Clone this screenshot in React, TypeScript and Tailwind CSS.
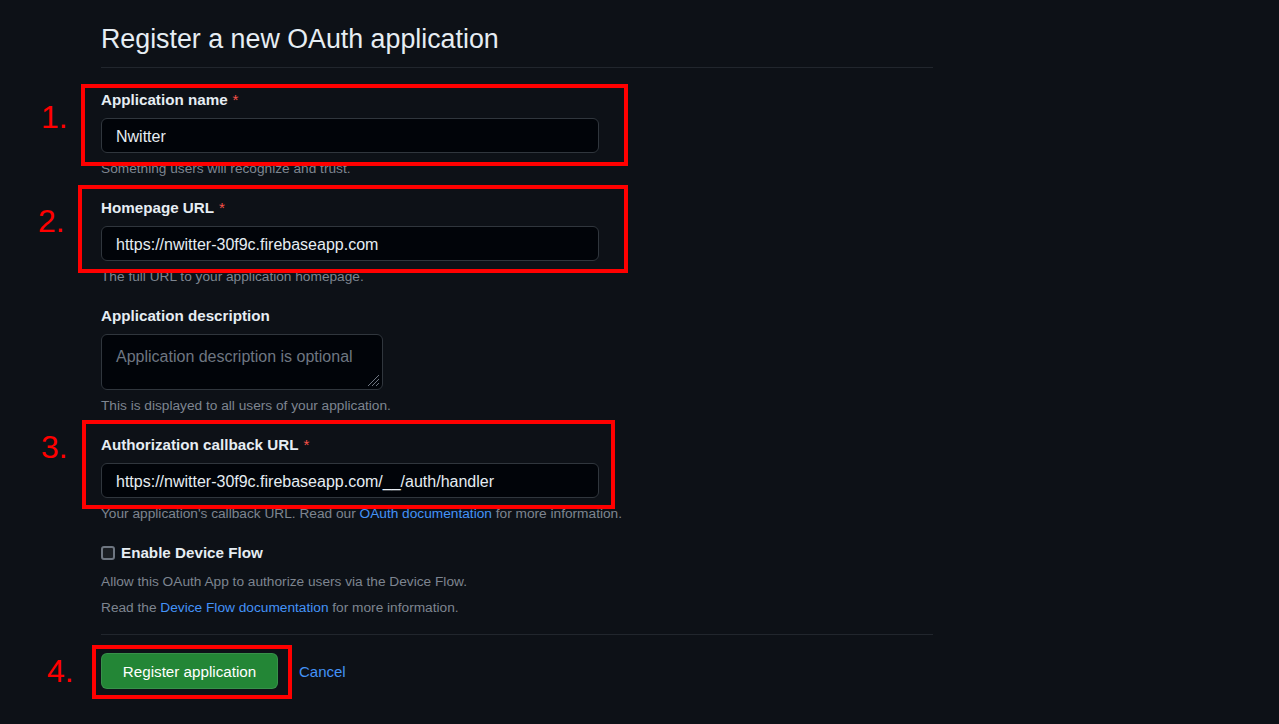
import type { ReactNode } from 'react'

const inputCls =
  'block h-[35px] w-[498px] rounded-[6px] border border-[#30363d] bg-[#010409] px-[14px] pt-[3px] text-[16px] text-[#e6edf3] outline-none'

function Label({ children, required }: { children: ReactNode; required?: boolean }) {
  return (
    <label className="block h-[20px] text-[15.2px] font-bold leading-[20px] text-[#e6edf3]">
      {children}
      {required && <span className="ml-[5px] font-normal text-[#f85149]">*</span>}
    </label>
  )
}

function Hint({ children, className = '' }: { children: ReactNode; className?: string }) {
  return <p className={`h-[18px] text-[13.7px] leading-[18px] text-[#7d8590] ${className}`}>{children}</p>
}

function Field({ label, required, value, hint }: { label: string; required?: boolean; value: string; hint: ReactNode }) {
  return (
    <div className="mt-[20px] first:mt-0">
      <Label required={required}>{label}</Label>
      <input readOnly value={value} className={`mt-[8px] ${inputCls}`} />
      <Hint className="mt-[7px]">{hint}</Hint>
    </div>
  )
}

// red annotation overlays from the screenshot
const marks = [
  { n: '1.', left: 'left-[41px] top-[101px]', box: 'left-[81px] top-[84px] h-[82px] w-[547px]' },
  { n: '2.', left: 'left-[38px] top-[205px]', box: 'left-[78px] top-[185px] h-[88px] w-[550px]' },
  { n: '3.', left: 'left-[41px] top-[431px]', box: 'left-[82px] top-[420px] h-[89px] w-[533px]' },
  { n: '4.', left: 'left-[47px] top-[655px]', box: 'left-[92px] top-[645px] h-[54px] w-[200px]' },
]

export default function App() {
  return (
    <div className="relative min-h-screen bg-[#0d1117] font-['Liberation_Sans',Arial,sans-serif] text-[#e6edf3]">
      <main className="ml-[101px] w-[832px] pt-[21px]">
        <h2 className="border-b border-[#21262d] pb-[10px] text-[26.8px] font-normal leading-[36px] text-[#e6edf3]">
          Register a new OAuth application
        </h2>

        <form className="pt-[22px]" onSubmit={(e) => e.preventDefault()}>
          <Field label="Application name" required value="Nwitter" hint="Something users will recognize and trust." />
          <Field
            label="Homepage URL"
            required
            value="https://nwitter-30f9c.firebaseapp.com"
            hint="The full URL to your application homepage."
          />

          <div className="mt-[20px]">
            <Label>Application description</Label>
            <div className="relative mt-[8px] w-[282px]">
              <textarea
                readOnly
                placeholder="Application description is optional"
                className="block h-[56px] w-full resize-none rounded-[6px] border border-[#30363d] bg-[#010409] px-[14px] pt-[12px] text-[16px] leading-[20px] text-[#e6edf3] outline-none placeholder:text-[#6e7681]"
              />
              <svg className="absolute bottom-[3px] right-[3px] h-[14px] w-[14px]" viewBox="0 0 14 14">
                <path d="M13 2 L2 13 M13 6 L6 13 M13 10 L10 13" stroke="#6e7681" strokeWidth="1" />
              </svg>
            </div>
            <Hint className="mt-[7px]">This is displayed to all users of your application.</Hint>
          </div>

          <Field
            label="Authorization callback URL"
            required
            value="https://nwitter-30f9c.firebaseapp.com/__/auth/handler"
            hint={
              <>
                Your application's callback URL. Read our <a className="text-[#4493f8]">OAuth documentation</a> for
                more information.
              </>
            }
          />

          <label className="mt-[20px] flex h-[20px] items-center gap-[6px] text-[15.2px] font-bold text-[#e6edf3]">
            <input
              type="checkbox"
              className="h-[14px] w-[14px] appearance-none rounded-[3px] border-2 border-[#6e7681] bg-[#1b1f24]"
            />
            Enable Device Flow
          </label>
          <Hint className="mt-[10px]">Allow this OAuth App to authorize users via the Device Flow.</Hint>
          <Hint className="mt-[8px]">
            Read the <a className="text-[#4493f8]">Device Flow documentation</a> for more information.
          </Hint>

          <div className="mt-[17px] border-t border-[#21262d] pt-[18px]">
            <div className="flex items-center">
              <button
                type="submit"
                className="h-[36px] w-[177px] rounded-[6px] border border-[#f0f6fc1a] bg-[#238636] pt-[2px] text-[15.2px] font-medium text-white"
              >
                Register application
              </button>
              <a className="ml-[21px] pt-[2px] text-[15px] text-[#4493f8]">Cancel</a>
            </div>
          </div>
        </form>
      </main>

      {marks.map((m) => (
        <div key={m.n}>
          <span className={`absolute ${m.left} text-[32px] leading-[32px] text-[#ff0000]`}>{m.n}</span>
          <div className={`pointer-events-none absolute ${m.box} border-4 border-[#ff0000]`} />
        </div>
      ))}
    </div>
  )
}
